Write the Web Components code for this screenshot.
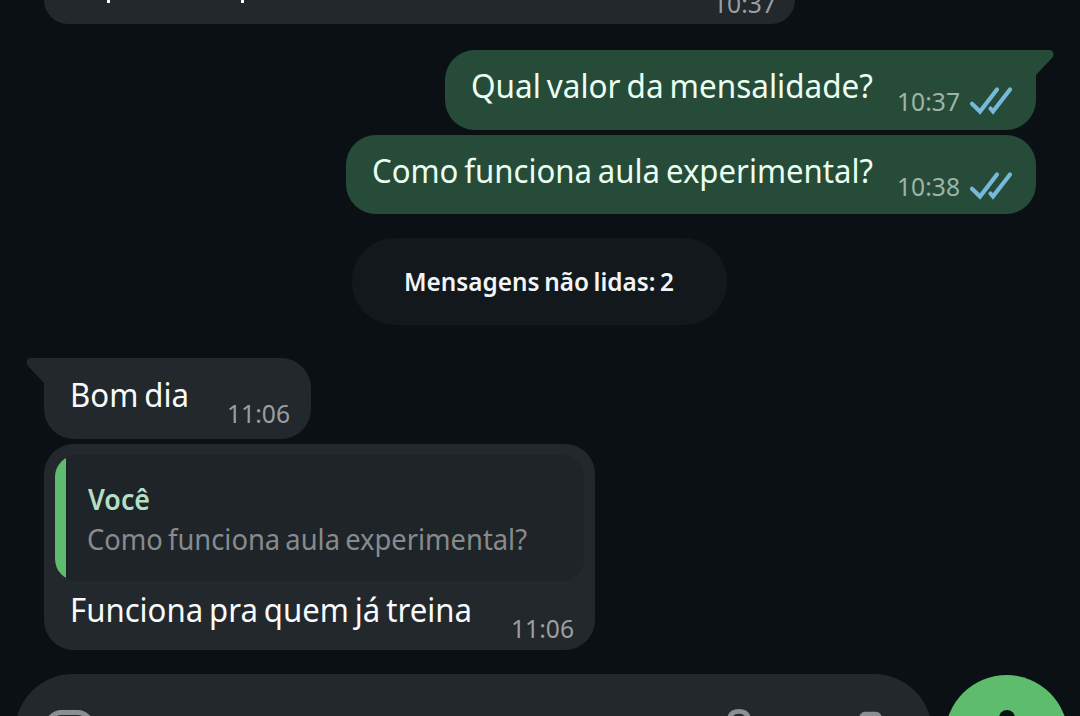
<!DOCTYPE html>
<html lang="pt-BR">
<head>
<meta charset="utf-8">
<title>Conversa</title>
<style>
html,body{margin:0;height:100%;overflow:hidden;background:#0b1014}
body{font-family:"Noto Sans","Open Sans",sans-serif}
</style>
</head>
<body>
<chat-screen></chat-screen>
<script>
const define=(name,html,setup)=>{
  const t=document.createElement('template');t.innerHTML=html;
  customElements.define(name,class extends HTMLElement{
    constructor(){super();this.attachShadow({mode:'open'}).append(t.content.cloneNode(true));}
    connectedCallback(){if(setup)setup.call(this,this.shadowRoot);}
  });
};

/* One line of text condensed to the advance width given in "w". */
define('fit-text',`<style>
:host{display:block;flex:none;white-space:nowrap;word-spacing:-.07em}
span{display:inline-block;transform-origin:0 50%;white-space:nowrap;vertical-align:top}
</style><span><slot></slot></span>`,function(r){
  const w=+this.getAttribute('w'),s=r.querySelector('span');
  this.style.width=w+'px';
  s.style.transform=`scaleX(${w/s.getBoundingClientRect().width})`;
});

define('read-ticks',`<style>:host{display:block;flex:none;width:44px;height:30px}svg{display:block}</style>
<svg width="44" height="30" viewBox="0 0 44 30" fill="none" stroke="#76b9d8" stroke-width="4.2" stroke-linecap="round" stroke-linejoin="miter">
<path d="M3 17.8 L11 25.5 L28 3.5"/><path d="M21.5 22.5 L24 25.5 L41 3.5"/></svg>`);

define('message-time',`<style>
:host{display:flex;flex:none;align-items:flex-start;color:#9b9ea1;font-size:25px;line-height:30px;height:30px}
:host([out]){color:#9cb5a6}
read-ticks{margin:0 2px 0 9px}
:host(:not([out])) read-ticks{display:none}
</style><fit-text w="63"><slot></slot></fit-text><read-ticks></read-ticks>`);

define('chat-bubble',`<style>
:host{display:block;position:relative;box-sizing:border-box;flex:none;background:#23282c;border-radius:30px;color:#f8fafb;font-size:32.8px;line-height:44px}
:host([out]){background:#274b39;color:#eafff1}
:host([tail=left]){border-top-left-radius:0}
:host([tail=right]){border-top-right-radius:0}
.row{display:flex;align-items:flex-start;justify-content:space-between;padding:14px 21px 0 26px}
::slotted(message-time){margin-top:22px}
svg{display:none;position:absolute;top:0}
:host([tail=left]) .l{display:block;left:-19px;fill:#23282c}
:host([tail=right]) .r{display:block;right:-19px;fill:#274b39}
</style>
<svg class="l" width="20" height="27"><path d="M20 0H6Q2 0 1.5 4Q1.3 6 3 8L19 25V27H20Z"/></svg>
<svg class="r" width="20" height="27"><path d="M0 0H14Q18 0 18.5 4Q18.7 6 17 8L1 25V27H0Z"/></svg>
<slot name="quote"></slot><div class="row"><slot></slot></div>`);

define('quoted-message',`<style>
:host{display:flex;height:126px;margin:0 11px;border-radius:22px;background:#1f2428;overflow:hidden}
i{display:block;flex:none;width:11px;background:#5fbb6d}
div{padding:24px 0 0 21px}
.name{margin-left:1px;color:#b5dfc4;font-weight:600;font-size:29.5px;line-height:40px}
.body{color:#878b8e;font-size:28.8px;line-height:40px}
</style><i></i><div><fit-text class="name" w="62">Você</fit-text><fit-text class="body" w="440"><slot></slot></fit-text></div>`);

define('unread-pill',`<style>
:host{display:flex;box-sizing:border-box;justify-content:center;align-items:center;align-self:center;width:375px;height:87px;border-radius:43px;background:#13181c;color:#f2f5f7;font-size:25.6px;font-weight:600;line-height:36px;flex:none;margin-right:2px}
</style><fit-text w="270"><slot></slot></fit-text>`);

define('cut-bubble',`<style>
:host{display:flex;flex:none;width:751px;height:24px;box-sizing:border-box;padding:0 19px 0 63px;background:#23282c;border-radius:0 0 30px 30px;overflow:hidden}
i{display:block;width:3px;height:3px;background:#f8fafb}
i+i{margin-left:131px}
message-time{margin:-12px 0 0 auto}
</style><i></i><i></i><message-time>10:37</message-time>`);

define('message-composer',`<style>
:host{display:flex;align-items:flex-start;height:42px;flex:none;overflow:hidden;padding-left:15px}
.field{display:flex;width:917px;height:116px;box-sizing:border-box;padding:35px 45px 0 31px;border-radius:58px;background:#23282c;flex:none}
.mic{display:flex;justify-content:center;width:123px;height:123px;box-sizing:border-box;padding-top:35px;border-radius:50%;background:#5dbd6c;margin:1px 0 0 13px;flex:none}
svg{display:block;flex:none}
.clip{margin-left:auto}.cam{margin:1px 0 0 104px}
</style>
<div class="field">
<svg width="48" height="46" fill="none" stroke="#8b8f93" stroke-width="5"><rect x="1.5" y="3.5" width="44" height="40" rx="14"/></svg>
<svg class="clip" width="24" height="46" fill="none" stroke="#8b8f93" stroke-width="4.8"><path d="M2.4 46V12Q2.4 2.4 12 2.4T21.6 12V46"/></svg>
<svg class="cam" width="32" height="40" fill="#8b8f93"><path d="M0 14L5 5Q7 1.7 10 1.7H21Q24 1.7 26 5L31 14V40H0Z"/></svg>
</div>
<div class="mic"><svg width="18" height="40"><rect x="1" y="0" width="16" height="36" rx="8" fill="#0b1014"/></svg></div>`);

define('chat-screen',`<style>
:host{display:flex;flex-direction:column;width:1080px;height:716px;overflow:hidden;background:#0b1014}
.in{margin-left:44px;align-self:flex-start}
.out{margin-right:44px;align-self:flex-end}
.a{margin-top:26px;width:591px;height:80px}
.b{margin-top:5px;width:690px;height:79px}
unread-pill{margin-top:24px}
.c{margin-top:33px;width:267px;height:81px}
.d{margin-top:5px;width:551px;height:206px;padding-top:11px}
message-composer{margin-top:24px}
.c fit-text{margin-top:1px}
.c message-time{margin-top:26px}
.d fit-text{margin-top:-7px}
.d message-time{margin-top:18px}
</style>
<cut-bubble class="in"></cut-bubble>
<chat-bubble class="out a" out tail="right"><fit-text w="402">Qual valor da mensalidade?</fit-text><message-time out>10:37</message-time></chat-bubble>
<chat-bubble class="out b" out><fit-text w="501">Como funciona aula experimental?</fit-text><message-time out>10:38</message-time></chat-bubble>
<unread-pill>Mensagens não lidas: 2</unread-pill>
<chat-bubble class="in c" tail="left"><fit-text w="119">Bom dia</fit-text><message-time>11:06</message-time></chat-bubble>
<chat-bubble class="in d"><quoted-message slot="quote">Como funciona aula experimental?</quoted-message><fit-text w="402">Funciona pra quem já treina</fit-text><message-time>11:06</message-time></chat-bubble>
<message-composer></message-composer>`);
</script>
</body>
</html>
